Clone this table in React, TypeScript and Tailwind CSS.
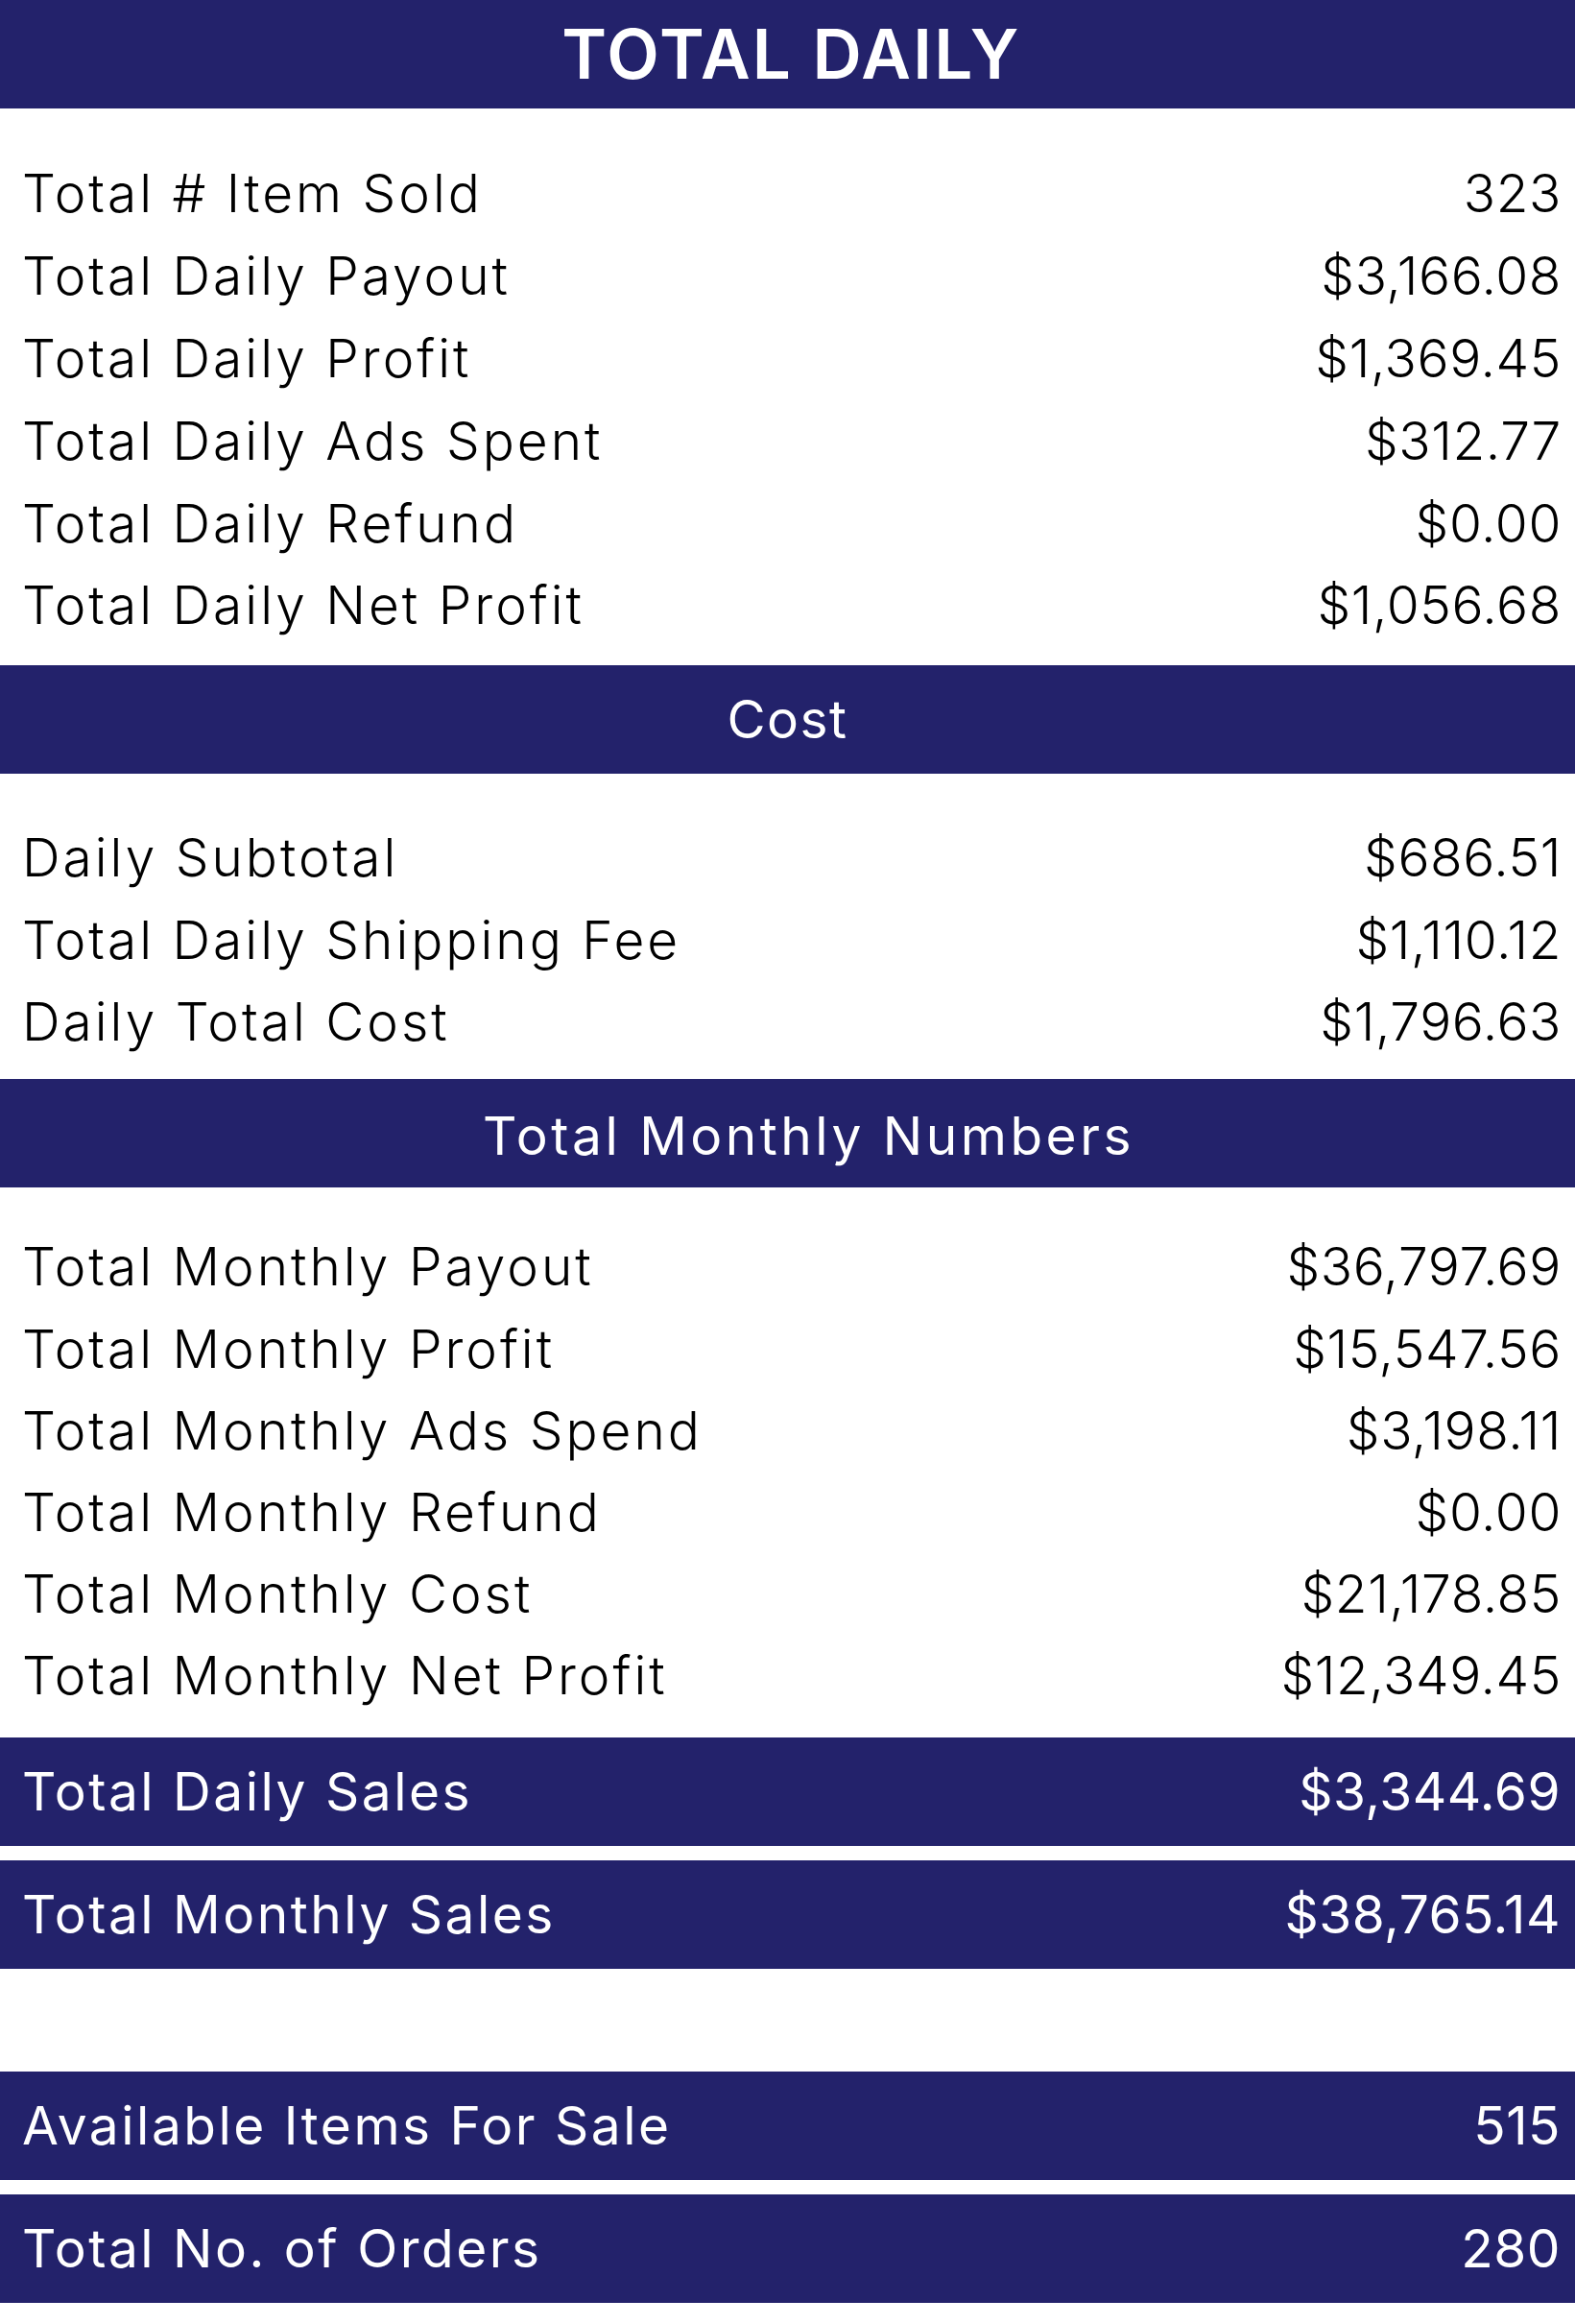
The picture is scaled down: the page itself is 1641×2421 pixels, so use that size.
const dailyRows = [
  ["Total # Item Sold", "323"],
  ["Total Daily Payout", "$3,166.08"],
  ["Total Daily Profit", "$1,369.45"],
  ["Total Daily Ads Spent", "$312.77"],
  ["Total Daily Refund", "$0.00"],
  ["Total Daily Net Profit", "$1,056.68"],
];

const costRows = [
  ["Daily Subtotal", "$686.51"],
  ["Total Daily Shipping Fee", "$1,110.12"],
  ["Daily Total Cost", "$1,796.63"],
];

const monthlyRows = [
  ["Total Monthly Payout", "$36,797.69"],
  ["Total Monthly Profit", "$15,547.56"],
  ["Total Monthly Ads Spend", "$3,198.11"],
  ["Total Monthly Refund", "$0.00"],
  ["Total Monthly Cost", "$21,178.85"],
  ["Total Monthly Net Profit", "$12,349.45"],
];

const Rows = ({ rows, className, rowClass }: { rows: string[][]; className: string; rowClass: string }) => (
  <div className={className}>
    {rows.map(([label, value]) => (
      <div key={label} className={`${rowClass} flex items-center justify-between pl-[23px] pr-[14px]`}>
        <span className="tracking-[3px]">{label}</span>
        <span className="tracking-[0.6px]">{value}</span>
      </div>
    ))}
  </div>
);

const TotalBar = ({ label, value }: { label: string; value: string }) => (
  <div className="h-[113px] bg-[#23226b] text-white flex items-center justify-between pl-[23px] pr-[15px]">
    <span className="tracking-[2.5px]">{label}</span>
    <span className="tracking-[0.5px]">{value}</span>
  </div>
);

export default function App() {
  return (
    <div className="w-[1641px] h-[2421px] bg-white text-black font-['Inter','Liberation_Sans',sans-serif] font-light text-[55px] leading-none">
      {/* TOTAL DAILY */}
      <div className="h-[113px] bg-[#23226b] text-white flex items-center justify-center pl-[8px] text-[71px] font-semibold tracking-[2.3px]">
        TOTAL DAILY
      </div>
      <Rows rows={dailyRows} className="pt-[46px] pb-[19px]" rowClass="h-[85.8px]" />

      {/* COST */}
      <div className="h-[113px] bg-[#23226b] text-white flex items-center justify-center font-normal tracking-[1.5px]">
        Cost
      </div>
      <Rows rows={costRows} className="pt-[45px] pb-[17px]" rowClass="h-[85.5px]" />

      {/* MONTHLY */}
      <div className="h-[113px] bg-[#23226b] text-white flex items-center justify-center pl-[44px] pt-[5px] font-normal tracking-[3.5px]">
        Total Monthly Numbers
      </div>
      <Rows rows={monthlyRows} className="pt-[40px] pb-[22px]" rowClass="h-[85.2px]" />

      {/* SALES TOTALS */}
      <div className="flex flex-col gap-[15px] font-normal">
        <TotalBar label="Total Daily Sales" value="$3,344.69" />
        <TotalBar label="Total Monthly Sales" value="$38,765.14" />
      </div>

      <div className="flex flex-col gap-[15px] font-normal mt-[107px]">
        <TotalBar label="Available Items For Sale" value="515" />
        <TotalBar label="Total No. of Orders" value="280" />
      </div>
    </div>
  );
}
